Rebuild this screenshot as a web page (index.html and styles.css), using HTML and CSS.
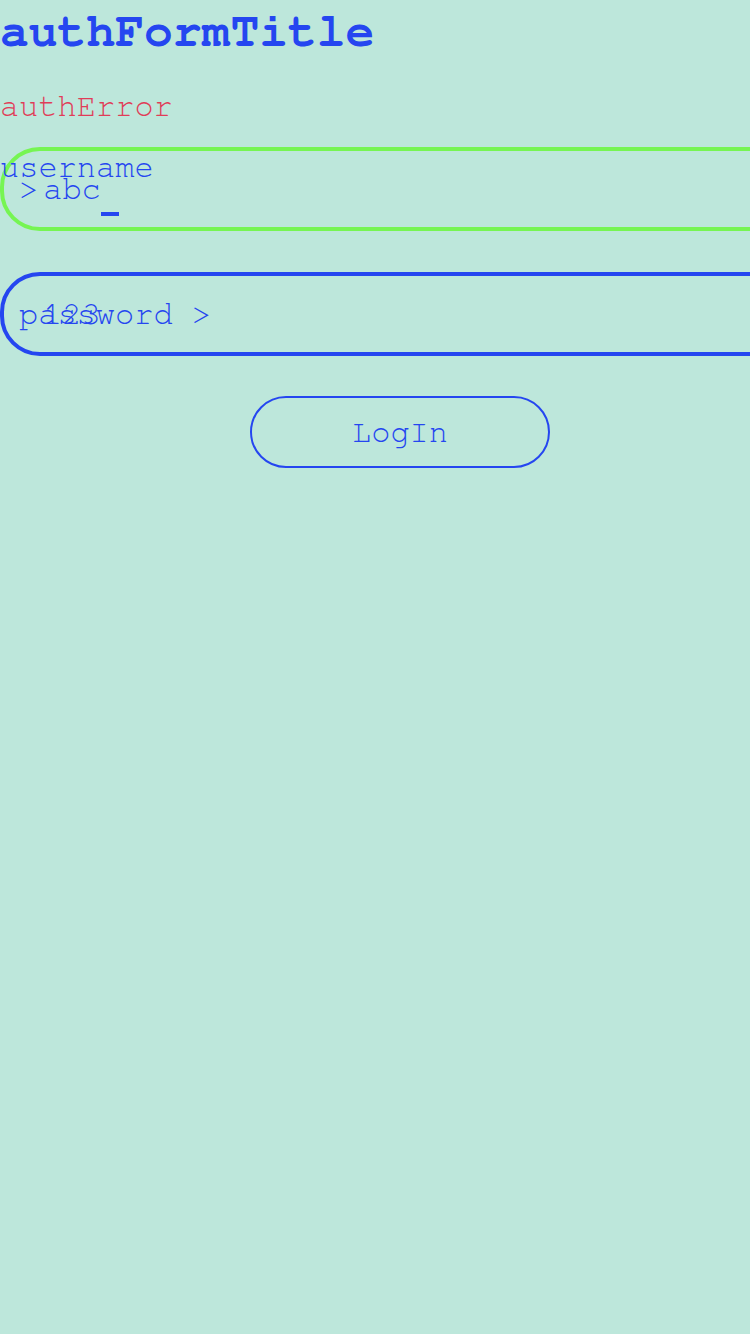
FILE: index.html
```html
<!DOCTYPE html>
<html lang="en">
<head>
<meta charset="utf-8">
<title>authFormTitle</title>
<link rel="stylesheet" href="styles.css">
</head>
<body>
<div class="form">
  <h1 class="title">authFormTitle</h1>
  <div class="error">authError</div>
  <div class="field field-active">
    <span class="field-label">username</span>
    <span class="prompt">&gt;</span>
    <span class="value">abc</span>
    <span class="cursor"></span>
  </div>
  <div class="field field-idle">
    <span class="placeholder">password &gt;</span>
    <span class="value value-over">123</span>
  </div>
  <button class="login" type="button">LogIn</button>
</div>
</body>
</html>
```
FILE: styles.css
```css
html {
  background: #bde7db;
  overflow: hidden;
}
body {
  margin: 0;
  font-family: "Nimbus Mono PS", "Nimbus Mono L", "FreeMono", "Liberation Mono", monospace;
  color: #2546f0;
}
.form {
  width: 800px;
  display: flex;
  flex-direction: column;
}
.title {
  margin: 0;
  font-size: 48px;
  line-height: 64px;
  font-weight: bold;
  color: #2546f0;
}
.error {
  margin-top: 24px;
  height: 36px;
  font-size: 32px;
  line-height: 36px;
  color: #e03d58;
}
.field {
  position: relative;
  box-sizing: border-box;
  margin-top: 23px;
  height: 84px;
  width: 800px;
  border: 4px solid #2546f0;
  border-radius: 40px;
  display: flex;
  align-items: center;
  padding-left: 15px;
  font-size: 32px;
}
.field + .field {
  margin-top: 41px;
}
.field-active {
  border-color: #76f553;
}
.field-label {
  position: absolute;
  left: -4px;
  top: 0;
  line-height: normal;
}
.prompt {
  line-height: normal;
}
.value {
  margin-left: 5px;
  line-height: normal;
}
.value-over {
  position: absolute;
  left: 39px;
  top: 50%;
  transform: translateY(-50%);
  margin-left: 0;
}
.placeholder {
  line-height: normal;
}
.cursor {
  position: absolute;
  left: 97px;
  top: 61px;
  width: 18px;
  height: 4px;
  background: #2546f0;
}
.login {
  align-self: center;
  margin-top: 40px;
  width: 300px;
  height: 72px;
  box-sizing: border-box;
  border: 2px solid #2546f0;
  border-radius: 36px;
  background: transparent;
  color: #2546f0;
  font-family: inherit;
  font-size: 32px;
  padding: 0;
}
```
